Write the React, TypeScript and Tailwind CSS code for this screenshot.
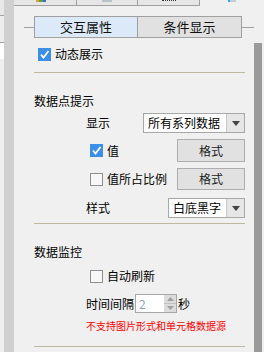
import React from 'react';

const font = { fontFamily: '"Noto Sans CJK SC", "Noto Sans", sans-serif' };

function CheckBox({ checked }: { checked?: boolean }) {
  if (checked) {
    return (
      <span className="flex h-[13px] w-[13px] items-center justify-center bg-[#3b8fe8]">
        <svg width="11" height="11" viewBox="0 0 11 11">
          <path d="M2 5.5 L4.5 8.5 L9.5 2" fill="none" stroke="#fff" strokeWidth="1.8" />
        </svg>
      </span>
    );
  }
  return <span className="h-[13px] w-[13px] border border-[#8f8f8f] bg-[#f7f7f7]" />;
}

function Select({ value, width }: { value: string; width: string }) {
  return (
    <div className={`flex h-[20px] ${width} border border-[#a8a8a8] bg-white`}>
      <span className="flex-1 pl-[4px] text-[12px] leading-[18px] text-black">{value}</span>
      <span className="flex w-[18px] items-center justify-center border-l border-[#c8c8c8] bg-[#e6e6e6]">
        <svg width="8" height="5" viewBox="0 0 8 5">
          <path d="M0 0 H8 L4 5 Z" fill="#444" />
        </svg>
      </span>
    </div>
  );
}

function FormatButton({ h }: { h: string }) {
  return (
    <button className={`${h} w-[68px] border border-[#adadad] bg-[#e1e1e1] text-[12px] text-[#222]`}>
      格式
    </button>
  );
}

function Divider() {
  return <div className="ml-[20px] h-[1px] w-[211px] bg-[#bdb8a0]" />;
}

export default function App() {
  return (
    <div className="flex h-[352px] w-[264px] overflow-hidden bg-[#f0f0f0]" style={font}>
      <div className="flex w-[4px] flex-col">
        <div className="h-[15px] bg-[#e8e8e8]" />
        <div className="h-[1px] bg-[#a0a0a0]" />
        <div className="h-[26px] bg-[#ededed]" />
        <div className="h-[1px] bg-[#a0a0a0]" />
        <div className="h-[16px] bg-white" />
        <div className="flex-1 bg-[#efefef]" />
      </div>
      <div className="w-[10px] bg-[#d0d0d0]" />

      <div className="flex w-[240px] flex-col">
        <div className="flex h-[6px]">
          <div className="flex w-[63px] justify-center border-r border-b border-[#a0a0a0] bg-[#e6e6e6]">
            <span className="ml-[-8px] flex h-[2px] w-[10px]">
              <span className="flex-1 bg-[#e0a030]" />
              <span className="flex-1 bg-[#5aa040]" />
              <span className="flex-1 bg-[#3a70c8]" />
            </span>
          </div>
          <div className="flex w-[61px] justify-center border-r border-b border-[#a0a0a0] bg-[#e6e6e6]">
            <span className="h-[2px] w-[10px] bg-[#b8c0cc]" />
          </div>
          <div className="flex w-[62px] justify-center border-r border-b border-[#a0a0a0] bg-[#e6e6e6]">
            <span className="h-[1px] w-[14px] border-t border-dotted border-[#333]" />
          </div>
          <div className="flex flex-1 justify-center">
            <span className="ml-[10px] flex h-[2px] w-[8px]">
              <span className="w-[2px] bg-[#30a8f0]" />
              <span className="flex-1 bg-[#c8ccd4]" />
            </span>
          </div>
        </div>

        <div className="mt-[10px] flex items-center">
          <div className="ml-[10px] h-[1px] w-[10px] bg-[#a0a0a0]" />
          <div className="flex h-[22px] w-[104px] items-center justify-center border border-[#a0a0a0] bg-[#dce9f9] text-[13px] text-[#111]">
            交互属性
          </div>
          <div className="flex h-[22px] w-[104px] items-center justify-center border border-l-0 border-[#a0a0a0] bg-[#e1e1e1] text-[13px] text-[#111]">
            条件显示
          </div>
          <div className="h-[1px] flex-1 bg-[#a0a0a0]" />
        </div>

        <div className="mt-[9px] ml-[24px] flex items-center gap-[4px]">
          <CheckBox checked />
          <span className="text-[12px] leading-[14px] text-black">动态展示</span>
        </div>

        <div className="mt-[11px]">
          <Divider />
        </div>

        <div className="mt-[20px] ml-[20px] text-[12px] leading-[16px] text-black">数据点提示</div>

        <div className="mt-[4px] ml-[72px] flex w-[159px] items-center justify-between">
          <span className="text-[12px] text-black">显示</span>
          <Select value="所有系列数据" width="w-[102px]" />
        </div>

        <div className="mt-[6px] ml-[72px] flex w-[159px] items-center justify-between">
          <span className="ml-[4px] flex items-center gap-[4px]">
            <CheckBox checked />
            <span className="text-[12px] text-black">值</span>
          </span>
          <FormatButton h="h-[23px]" />
        </div>

        <div className="mt-[6px] ml-[72px] flex w-[159px] items-center justify-between">
          <span className="ml-[4px] flex items-center gap-[4px]">
            <CheckBox />
            <span className="text-[12px] text-black">值所占比例</span>
          </span>
          <FormatButton h="h-[22px]" />
        </div>

        <div className="mt-[8px] ml-[72px] flex w-[159px] items-center justify-between">
          <span className="text-[12px] text-black">样式</span>
          <Select value="白底黑字" width="w-[77px]" />
        </div>

        <div className="mt-[5px]">
          <Divider />
        </div>

        <div className="mt-[20px] ml-[20px] text-[12px] leading-[16px] text-black">数据监控</div>

        <div className="mt-[9px] ml-[76px] flex items-center gap-[4px]">
          <CheckBox />
          <span className="text-[12px] leading-[14px] text-black">自动刷新</span>
        </div>

        <div className="mt-[11px] ml-[72px] flex items-center">
          <span className="text-[12px] text-black">时间间隔</span>
          <div className="ml-[1px] flex h-[19px] w-[42px] border border-[#a8a8a8] bg-white">
            <span className="flex-1 pl-[3px] text-[12px] leading-[17px] text-[#8da4c4]">2</span>
            <div className="flex w-[12px] flex-col bg-[#dcdcdc]">
              <span className="flex flex-1 items-center justify-center border-b border-[#c0c0c0]">
                <svg width="7" height="4" viewBox="0 0 7 4">
                  <path d="M0 4 H7 L3.5 0 Z" fill="#a0a0a0" />
                </svg>
              </span>
              <span className="flex flex-1 items-center justify-center">
                <svg width="7" height="4" viewBox="0 0 7 4">
                  <path d="M0 0 H7 L3.5 4 Z" fill="#a0a0a0" />
                </svg>
              </span>
            </div>
          </div>
          <span className="ml-[1px] text-[12px] text-black">秒</span>
        </div>

        <div className="mt-[6px] ml-[72px] text-[10px] leading-[14px] text-[#ff0000]">
          不支持图片形式和单元格数据源
        </div>

        <div className="mt-[13px]">
          <Divider />
        </div>
      </div>

      <div className="flex w-[8px] flex-col">
        <div className="h-[43px]" />
        <div className="flex-1 bg-[#9a9a9a]" />
      </div>
      <div className="w-[2px]" />
    </div>
  );
}
